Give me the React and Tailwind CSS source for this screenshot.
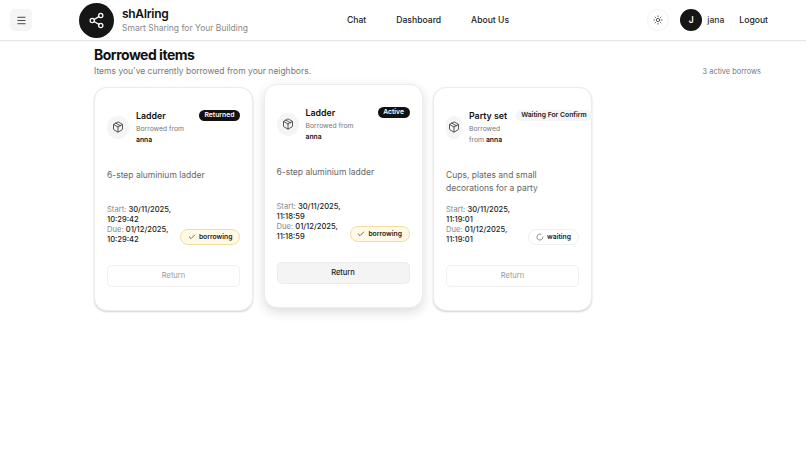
import React from 'react';
import { Menu, Share2, Sun, Package, Check, LoaderCircle } from 'lucide-react';

const borrows = [
  {
    title: 'Ladder',
    badge: 'Returned',
    from: 'Borrowed from',
    desc: '6-step aluminium ladder',
    start: '30/11/2025,',
    startTime: '10:29:42',
    due: '01/12/2025,',
    dueTime: '10:29:42',
    state: 'borrowing',
  },
  {
    title: 'Ladder',
    badge: 'Active',
    from: 'Borrowed from',
    desc: '6-step aluminium ladder',
    start: '30/11/2025,',
    startTime: '11:18:59',
    due: '01/12/2025,',
    dueTime: '11:18:59',
    state: 'borrowing',
    lifted: true,
  },
  {
    title: 'Party set',
    badge: 'Waiting For Confirm',
    from: 'Borrowed',
    desc: 'Cups, plates and small decorations for a party',
    start: '30/11/2025,',
    startTime: '11:19:01',
    due: '01/12/2025,',
    dueTime: '11:19:01',
    state: 'waiting',
  },
];

const BorrowCard = ({ item }) => {
  const waiting = item.state === 'waiting';
  return (
    <div
      className={`w-[159px] h-[224px] shrink-0 rounded-[13px] bg-white border border-[#ececec] px-[12px] pt-[22px] flex flex-col ${
        item.lifted
          ? '-translate-y-[3px] shadow-[0_4px_12px_rgba(0,0,0,0.14)]'
          : 'shadow-[0_1px_2px_rgba(0,0,0,0.18)]'
      }`}
    >
      <div className="flex items-center gap-[7px] h-[34px]">
        <div
          className={`h-[23px] rounded-full bg-[#f5f5f5] flex items-center justify-center shrink-0 ${
            waiting ? 'w-[16px]' : 'w-[22px]'
          }`}
        >
          <Package size={12} strokeWidth={1.5} className="text-[#222] shrink-0" />
        </div>
        <div className="flex-1 min-w-0">
          <div className="flex items-start justify-between gap-[9px] whitespace-nowrap">
            <span className="text-[8.8px] leading-[12px] font-semibold text-[#111]">{item.title}</span>
            {waiting ? (
              <span className="rounded-full bg-[#f5f5f5] px-[5px] h-[11px] flex items-center text-[6.8px] font-semibold text-[#222]">
                {item.badge}
              </span>
            ) : (
              <span className="rounded-full bg-[#111] px-[5.5px] h-[11px] flex items-center text-[6.8px] font-semibold text-white">
                {item.badge}
              </span>
            )}
          </div>
          <p className="mt-[1px] text-[6.8px] leading-[11px] text-[#777]">
            {item.from}
            {waiting ? <br /> : null}
            {waiting ? 'from ' : null}
            {waiting ? <b className="font-semibold text-[#111]">anna</b> : null}
          </p>
          {waiting ? null : <p className="text-[6.8px] leading-[11px] font-semibold text-[#111]">anna</p>}
        </div>
      </div>

      <p className="mt-[25px] h-[26px] text-[8.5px] leading-[13px] text-[#666]">{item.desc}</p>

      <div className="mt-[10px] flex items-end justify-between">
        <div className="text-[7.6px] leading-[10px] font-medium text-[#222] w-[72px]">
          <div><span className="font-normal text-[#888]">Start: </span>{item.start}</div>
          <div>{item.startTime}</div>
          <div><span className="font-normal text-[#888]">Due: </span>{item.due}</div>
          <div>{item.dueTime}</div>
        </div>
        {waiting ? (
          <span className="h-[16px] px-[7px] rounded-full border border-[#f0f0f0] bg-white flex items-center gap-[3px] text-[6.8px] font-semibold text-[#222]">
            <LoaderCircle size={8} strokeWidth={1.5} />
            waiting
          </span>
        ) : (
          <span className="h-[16px] px-[6.5px] rounded-full border-[1.5px] border-[#f2dfa0] bg-[#fff9e6] flex items-center gap-[3px] text-[6.8px] font-semibold text-[#222]">
            <Check size={8} strokeWidth={2} />
            borrowing
          </span>
        )}
      </div>

      <button
        className={`mt-[20px] h-[22px] w-full rounded-[5px] text-[7.5px] flex items-center justify-center ${
          item.lifted
            ? 'bg-[#f4f4f4] border border-[#ececec] text-[#222] font-medium'
            : 'bg-white border border-[#f1f1f1] text-[#999]'
        }`}
      >
        Return
      </button>
    </div>
  );
};

export default function App() {
  return (
    <div className="w-[806px] h-[474px] bg-white overflow-hidden font-['Inter',sans-serif]">
      <header className="h-[41px] bg-white border-b border-[#e8e8e8] shadow-[0_1px_2px_rgba(0,0,0,0.04)] flex items-center pl-[10px] pr-[38px]">
        <button className="w-[22px] h-[22px] rounded-[5px] bg-[#f5f5f5] flex items-center justify-center">
          <Menu size={11} strokeWidth={1.75} className="text-[#222]" />
        </button>
        <div className="ml-[47px] w-[35px] h-[35px] rounded-full bg-[#161616] flex items-center justify-center">
          <Share2 size={17} strokeWidth={1.75} className="text-white" />
        </div>
        <div className="ml-[8px] w-[211px]">
          <div className="text-[12px] leading-[16px] font-semibold tracking-[-0.3px] text-[#111]">shAIring</div>
          <div className="text-[8.5px] leading-[13px] text-[#888]">Smart Sharing for Your Building</div>
        </div>
        <nav className="h-[34px] flex items-center gap-[30px] px-[14px] rounded-[5px] shadow-[0_1px_2px_rgba(0,0,0,0.015)] text-[8.6px] font-medium text-[#222]">
          <span>Chat</span>
          <span>Dashboard</span>
          <span>About Us</span>
        </nav>
        <div className="ml-auto flex items-center">
          <button className="w-[22px] h-[22px] rounded-full border border-[#f4f4f4] flex items-center justify-center">
            <Sun size={10} strokeWidth={1.75} className="text-[#222]" />
          </button>
          <div className="ml-[11px] w-[22px] h-[22px] rounded-full bg-[#161616] flex items-center justify-center text-[8.5px] font-semibold text-white">J</div>
          <span className="ml-[5px] text-[8.6px] font-medium text-[#333]">jana</span>
          <span className="ml-[15px] text-[8.6px] font-medium text-[#222]">Logout</span>
        </div>
      </header>

      <main className="pl-[94px] pr-[45px]">
        <div className="flex justify-between items-end pt-[5px]">
          <div>
            <h1 className="text-[14px] leading-[18px] font-bold tracking-[-0.5px] text-[#111]">Borrowed items</h1>
            <p className="mt-[1px] text-[8.5px] leading-[13px] text-[#777]">Items you've currently borrowed from your neighbors.</p>
          </div>
          <span className="text-[7.4px] leading-[13px] text-[#777]">3 active borrows</span>
        </div>
        <div className="mt-[9px] flex gap-[10.5px]">
          {borrows.map((item, i) => (
            <BorrowCard key={i} item={item} />
          ))}
        </div>
      </main>
    </div>
  );
}
